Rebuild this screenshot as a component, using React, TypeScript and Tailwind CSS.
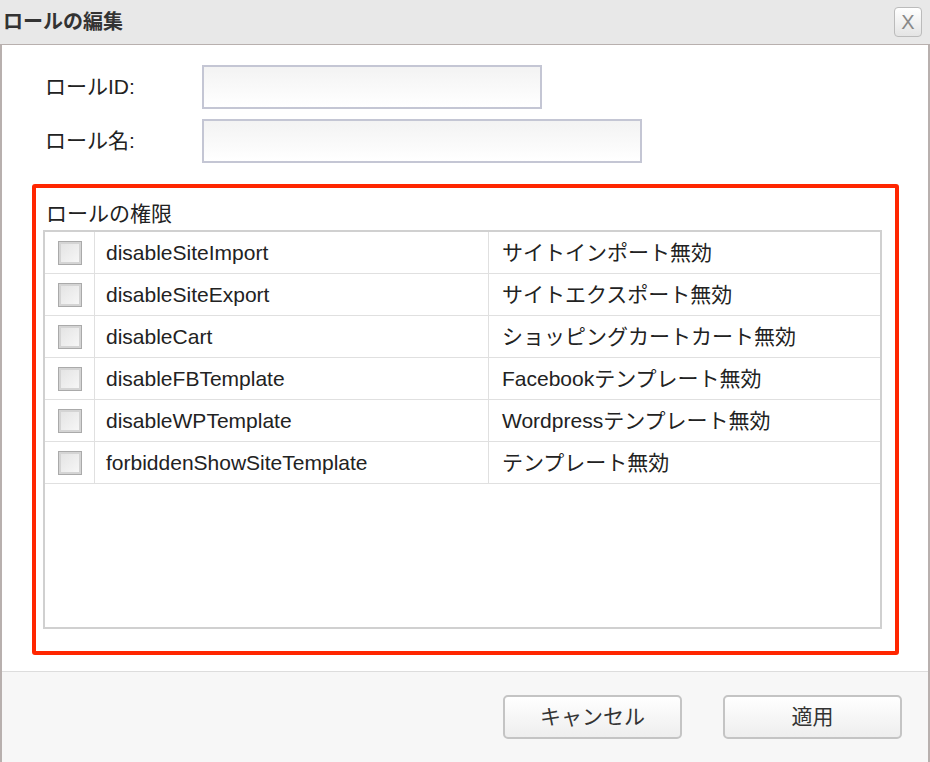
const rows: [string, string][] = [
  ['disableSiteImport', 'サイトインポート無効'],
  ['disableSiteExport', 'サイトエクスポート無効'],
  ['disableCart', 'ショッピングカートカート無効'],
  ['disableFBTemplate', 'Facebookテンプレート無効'],
  ['disableWPTemplate', 'Wordpressテンプレート無効'],
  ['forbiddenShowSiteTemplate', 'テンプレート無効'],
]

const font = { fontFamily: '"Liberation Sans", "Noto Sans CJK JP", sans-serif' }

export default function App() {
  return (
    <div style={font} className="flex h-[762px] w-[930px] flex-col bg-white text-[21px] text-[#222]">
      <div className="flex h-[45px] shrink-0 items-center justify-between border-b border-[#b8b0ae] bg-[#e8e8e8] pl-[3px] pr-[8px]">
        <span className="text-[20px] font-bold text-[#333]">ロールの編集</span>
        <button className="flex h-[30px] w-[28px] items-center justify-center rounded-[4px] border border-[#bbb] bg-gradient-to-b from-white to-[#e4e4e4] text-[20px] leading-none text-[#888]">
          X
        </button>
      </div>
      <div className="flex flex-1 flex-col border-x-2 border-[#b8b0ae]">
        <div className="flex flex-1 flex-col px-[30px] pt-[20px]">
          <div className="flex items-center">
            <span className="w-[170px] pl-[13px]">ロールID:</span>
            <div className="h-[44px] w-[340px] border-2 border-[#c4c6d4] bg-gradient-to-b from-[#f3f3f3] to-white" />
          </div>
          <div className="mt-[10px] flex items-center">
            <span className="w-[170px] pl-[13px]">ロール名:</span>
            <div className="h-[44px] w-[440px] border-2 border-[#c4c6d4] bg-gradient-to-b from-[#f3f3f3] to-white" />
          </div>
          <div className="mt-[21px] flex h-[471px] w-[867px] flex-col rounded-[3px] border-[4px] border-[#ff2600] pb-[22px] pl-[7px] pr-[13px] pt-[14px]">
            <div className="mb-[4px] pl-[3px] leading-[24px]">ロールの権限</div>
            <div className="flex-1 border-2 border-[#d0d0d0]">
              {rows.map(([k, v]) => (
                <div key={k} className="flex h-[42px] border-b border-[#e0e0e0]">
                  <div className="flex w-[50px] items-center justify-center border-r border-[#e0e0e0]">
                    <span className="block h-[24px] w-[24px] border border-[#aaa] bg-gradient-to-br from-[#e2e2e2] to-[#f8f8f8] shadow-[inset_0_0_0_2px_#d4d4d4]" />
                  </div>
                  <div className="flex w-[394px] items-center border-r border-[#e0e0e0] pl-[11px]">{k}</div>
                  <div className="flex flex-1 items-center pl-[13px]">{v}</div>
                </div>
              ))}
            </div>
          </div>
        </div>
        <div className="flex h-[91px] shrink-0 items-center justify-end gap-[41px] border-t border-[#ddd] bg-[#f7f7f7] pr-[26px]">
          <button className="h-[44px] w-[179px] rounded-[5px] border-2 border-[#c4c4c4] bg-gradient-to-b from-white to-[#eee] text-[#333]">キャンセル</button>
          <button className="h-[44px] w-[179px] rounded-[5px] border-2 border-[#c4c4c4] bg-gradient-to-b from-white to-[#eee] text-[#333]">適用</button>
        </div>
      </div>
    </div>
  )
}
